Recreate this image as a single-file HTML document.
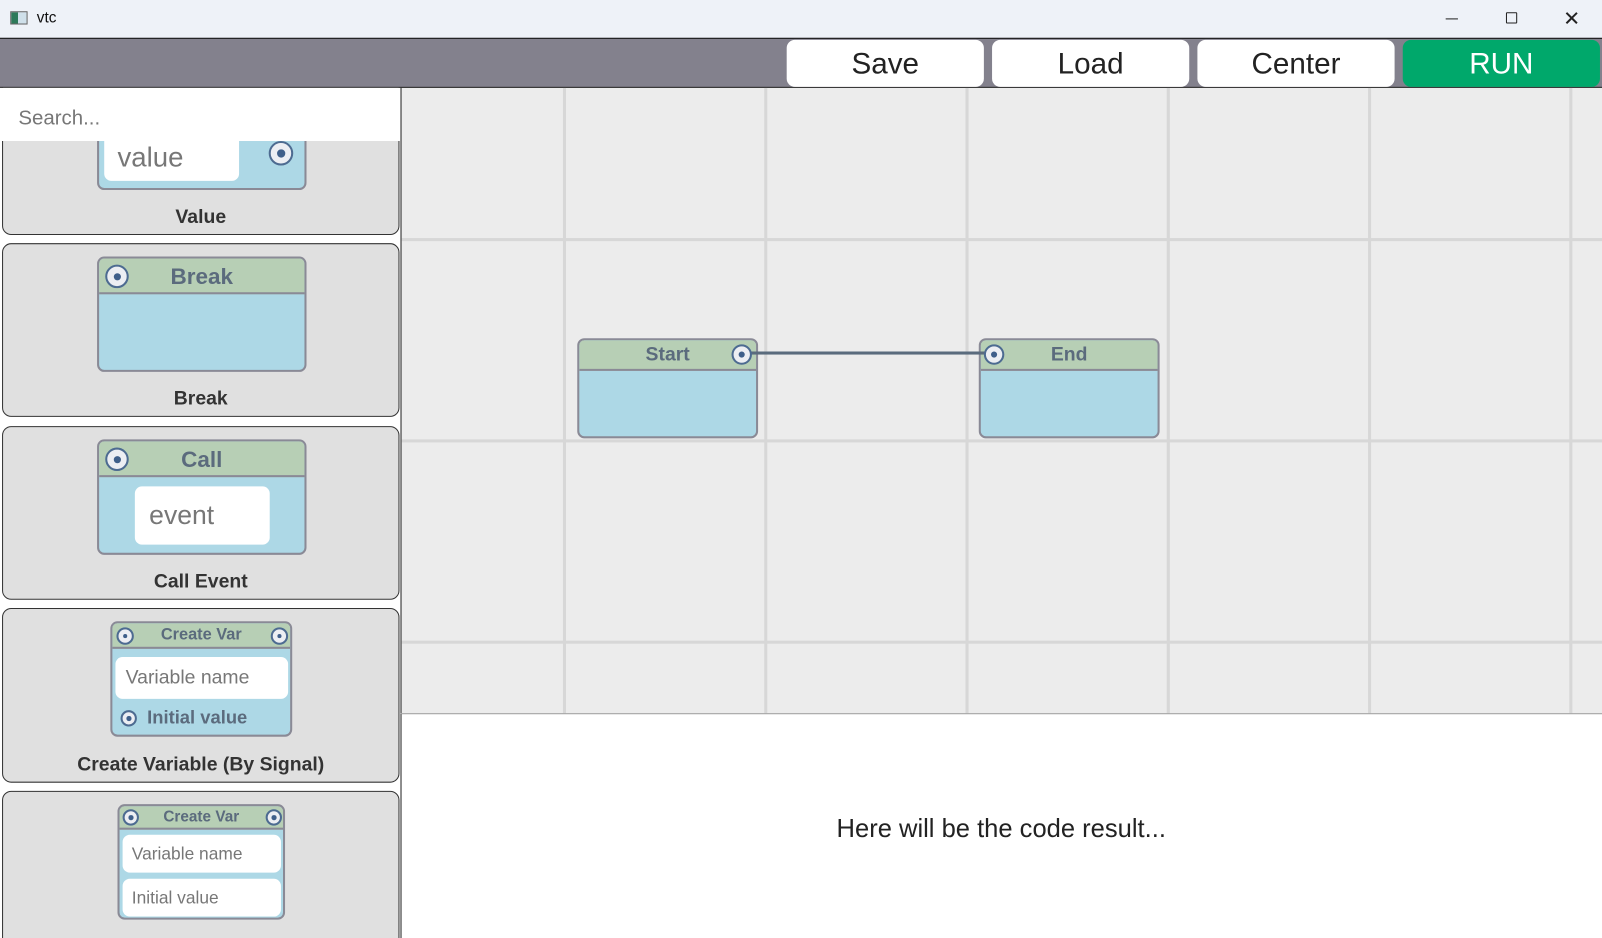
<!DOCTYPE html>
<html><head><meta charset="utf-8"><style>
*{box-sizing:border-box;margin:0;padding:0}
html,body{width:1602px;height:938px;overflow:hidden;background:#fff;font-family:"Liberation Sans","DejaVu Sans",sans-serif}
#st{position:absolute;left:0;top:0;width:1568px;height:918px;transform:scale(1.02168,1.02179);transform-origin:0 0}
.a{position:absolute}
.btn{position:absolute;top:39px;height:46px;background:#fff;border-radius:8px;font-size:29px;color:#222;text-align:center;line-height:48px}
.card{position:absolute;left:2px;width:389px;background:#e0e0e0;border:1.5px solid #333;border-radius:9px}
.lbl{position:absolute;left:0;right:0;text-align:center;font-weight:bold;font-size:19px;color:#333}
.node{position:absolute;background:#add8e6;border:2px solid #8a8a96;border-radius:7px;overflow:hidden}
.hd{position:absolute;left:0;right:0;top:0;background:#b7cfb5;border-bottom:2px solid #8a8a96;text-align:center;font-weight:bold;color:#5b6b7d}
.pin{position:absolute;border:2px solid #4d6b91;background:#eceef3;border-radius:50%}
.pin:after{content:"";position:absolute;left:50%;top:50%;width:38%;height:38%;transform:translate(-50%,-50%);background:#3f5f8a;border-radius:50%}
.inp{position:absolute;background:#fff;border-radius:7px;color:#777}
</style></head><body><div id="st">
<div class="a" style="left:0;top:0;width:1568px;height:38px;background:#eef2f8"></div>
<div class="a" style="left:10px;top:11px;width:17px;height:13px;border:1px solid #666;background:linear-gradient(90deg,#2d7a5a 0 45%,#cfe0ea 45%)"></div>
<div class="a" style="left:36px;top:9px;font-size:15px;color:#111">vtc</div>
<div class="a" style="left:1415px;top:18px;width:12px;height:1px;background:#222"></div>
<div class="a" style="left:1474px;top:12px;width:11px;height:11px;border:1.3px solid #222;border-radius:1px"></div>
<div class="a" style="left:1530px;top:6px;font-size:20px;color:#222">✕</div>
<div class="a" style="left:0;top:37px;width:1568px;height:49px;background:#83818d;border-top:1.5px solid #111;border-bottom:1.5px solid #111"></div>
<div class="btn" style="left:770px;width:193px">Save</div>
<div class="btn" style="left:971px;width:193px">Load</div>
<div class="btn" style="left:1172px;width:193px">Center</div>
<div class="btn" style="left:1373px;width:193px;background:#00a86b;color:#fff">RUN</div>
<!-- canvas -->
<div class="a" style="left:392px;top:86px;width:1176px;height:612px;background:#ececec;border-left:1.5px solid #222;overflow:hidden">
<div class="a" style="left:158px;top:0;width:3px;height:612px;background:#d7d7d7"></div>
<div class="a" style="left:355px;top:0;width:3px;height:612px;background:#d7d7d7"></div>
<div class="a" style="left:552px;top:0;width:3px;height:612px;background:#d7d7d7"></div>
<div class="a" style="left:749px;top:0;width:3px;height:612px;background:#d7d7d7"></div>
<div class="a" style="left:946px;top:0;width:3px;height:612px;background:#d7d7d7"></div>
<div class="a" style="left:1143px;top:0;width:3px;height:612px;background:#d7d7d7"></div>
<div class="a" style="left:0;top:147px;width:1176px;height:3px;background:#d7d7d7"></div>
<div class="a" style="left:0;top:344px;width:1176px;height:3px;background:#d7d7d7"></div>
<div class="a" style="left:0;top:541px;width:1176px;height:3px;background:#d7d7d7"></div>
</div>
<div class="node" style="left:565px;top:331px;width:177px;height:98px"><div class="hd" style="height:30px;font-size:19px;line-height:29px">Start</div></div>
<div class="node" style="left:958px;top:331px;width:177px;height:98px"><div class="hd" style="height:30px;font-size:19px;line-height:29px">End</div></div>
<div class="a" style="left:726px;top:344px;width:248px;height:3px;background:#5a6b7d"></div>
<div class="pin" style="left:716px;top:337px;width:20px;height:20px"></div>
<div class="pin" style="left:963px;top:337px;width:20px;height:20px"></div>
<!-- output -->
<div class="a" style="left:392px;top:698px;width:1176px;height:220px;background:#fff;border-left:1.5px solid #222;border-top:1px solid #999"></div>
<div class="a" style="left:392px;top:797px;width:1176px;text-align:center;font-size:25px;color:#222">Here will be the code result...</div>
<!-- sidebar -->
<div class="a" style="left:0;top:86px;width:392px;height:832px;background:#fff;overflow:hidden">
<div class="card" style="top:-10px;height:154px">
 <div class="node" style="left:92px;top:30px;width:205px;height:79px">
  <div class="inp" style="left:5px;top:0;width:132px;height:68px;font-size:27px;padding:32px 0 0 13px;line-height:26px">value</div>
  <div class="pin" style="left:166px;top:29px;width:24px;height:24px"></div>
 </div>
 <div class="lbl" style="top:125px">Value</div>
</div>
<div class="card" style="top:152px;height:170px">
 <div class="node" style="left:92px;top:12px;width:205px;height:113px"><div class="hd" style="height:35px;font-size:22px;line-height:35px">Break</div>
 <div class="pin" style="left:6px;top:6px;width:23px;height:23px"></div></div>
 <div class="lbl" style="top:141px">Break</div>
</div>
<div class="card" style="top:331px;height:170px">
 <div class="node" style="left:92px;top:12px;width:205px;height:113px"><div class="hd" style="height:35px;font-size:22px;line-height:35px">Call</div>
 <div class="pin" style="left:6px;top:6px;width:23px;height:23px"></div>
 <div class="inp" style="left:35px;top:44px;width:132px;height:57px;font-size:26px;line-height:57px;padding-left:14px">event</div></div>
 <div class="lbl" style="top:141px">Call Event</div>
</div>
<div class="card" style="top:509px;height:171px">
 <div class="node" style="left:105px;top:12px;width:178px;height:113px"><div class="hd" style="height:25px;font-size:16px;line-height:24px">Create Var</div>
 <div class="pin" style="left:4px;top:4px;width:17px;height:17px"></div>
 <div class="pin" style="left:155px;top:4px;width:17px;height:17px"></div>
 <div class="inp" style="left:3px;top:33px;width:169px;height:41px;font-size:19px;line-height:41px;padding-left:10px">Variable name</div>
 <div class="pin" style="left:8px;top:85px;width:16px;height:16px"></div>
 <div class="a" style="left:34px;top:82px;font-size:18px;font-weight:bold;color:#5b6b7d">Initial value</div></div>
 <div class="lbl" style="top:142px">Create Variable (By Signal)</div>
</div>
<div class="card" style="top:688px;height:160px">
 <div class="node" style="left:112px;top:12px;width:164px;height:113px"><div class="hd" style="height:23px;font-size:15px;line-height:22px">Create Var</div>
 <div class="pin" style="left:3px;top:3px;width:16px;height:16px"></div>
 <div class="pin" style="left:143px;top:3px;width:16px;height:16px"></div>
 <div class="inp" style="left:3px;top:28px;width:155px;height:37px;font-size:17px;line-height:37px;padding-left:9px">Variable name</div>
 <div class="inp" style="left:3px;top:71px;width:155px;height:37px;font-size:17px;line-height:37px;padding-left:9px">Initial value</div></div>
</div>
<div class="a" style="left:0;top:0;width:392px;height:52px;background:#fff;font-size:20px;color:#777;padding:19px 0 0 18px">Search...</div>
</div>
</div></body></html>
